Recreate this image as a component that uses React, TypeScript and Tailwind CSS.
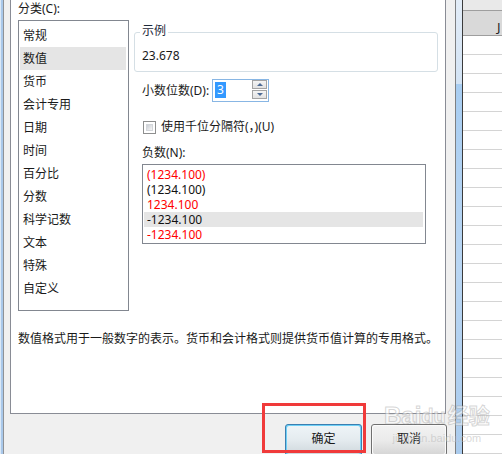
import React from 'react';

const categories = ['常规', '数值', '货币', '会计专用', '日期', '时间', '百分比', '分数', '科学记数', '文本', '特殊', '自定义'];

const negatives = [
  { text: '(1234.100)', red: true },
  { text: '(1234.100)', red: false },
  { text: '1234.100', red: true },
  { text: '-1234.100', red: false, selected: true },
  { text: '-1234.100', red: true },
];

function SpinBox() {
  return (
    <div className="w-[57px] h-[23px] border border-[#88b6e4] bg-white flex items-stretch">
      <div className="flex-1 pl-[2px] pt-[2px]">
        <span className="inline-block bg-[#3399ff] text-white leading-[16px] px-[2px]">3</span>
      </div>
      <div className="flex flex-col gap-[1px] pr-[1px] w-[16px]">
        <div className="h-[9px] border border-[#a3a3a3] bg-gradient-to-b from-[#f4f4f4] to-[#e2e2e2] flex items-center justify-center">
          <div className="w-0 h-0 border-l-[3px] border-r-[3px] border-b-[3px] border-l-transparent border-r-transparent border-b-[#4d6a94]" />
        </div>
        <div className="h-[9px] border border-[#a3a3a3] bg-gradient-to-b from-[#f4f4f4] to-[#e2e2e2] flex items-center justify-center">
          <div className="w-0 h-0 border-l-[3px] border-r-[3px] border-t-[3px] border-l-transparent border-r-transparent border-t-[#4d6a94]" />
        </div>
      </div>
    </div>
  );
}

function Checkbox() {
  return (
    <div className="w-[13px] h-[13px] border border-[#8e8f8f] bg-white p-[2px]">
      <div className="w-full h-full bg-gradient-to-br from-[#cbcfd5] to-[#f6f6f6] border border-[#d3d6da]" />
    </div>
  );
}

function ExcelSheet() {
  const rows = Array.from({ length: 22 });
  return (
    <div className="w-[39px] bg-white flex flex-col">
      <div className="h-[20px] bg-[#e9e9e9] border-b border-[#9e9e9e]" />
      <div className="h-[27px] bg-[#d9d9d9] border-b border-[#9e9e9e] pl-[34px] pt-[8px] text-[13px] leading-[16px] text-[#222]">
        J
      </div>
      {rows.map((_, i) => (
        <div key={i} className="h-[19px] shrink-0 border-b border-[#d4d4d4]" />
      ))}
    </div>
  );
}

export default function App() {
  return (
    <div className="relative w-[502px] h-[454px] overflow-hidden flex bg-[#f0f0f0] font-['Noto_Sans','Noto_Sans_CJK_SC',sans-serif] text-[12px] leading-[16px] text-[#1a1a1a]">
      {/* left window frame */}
      <div className="w-[1px] bg-[#dbe8f6]" />
      <div className="w-[2px] bg-[#a9c8ea]" />
      <div className="w-[1px] bg-[#8e9196]" />

      {/* dialog */}
      <div className="w-[451px] flex flex-col">
        <div className="ml-[6px] w-[436px] h-[414px] shrink-0 bg-white border-l border-r border-b border-[#898c95] pl-[7px]">
          <div className="flex gap-[5px]">
            {/* category column */}
            <div className="w-[111px] flex flex-col">
              <div className="h-[20px] pt-[1px]">分类(C):</div>
              <div className="h-[291px] border border-[#828790] pt-[3px] pl-[1px]">
                {categories.map((c) => (
                  <div
                    key={c}
                    className={
                      'h-[23px] w-[106px] pl-[3px] flex items-center ' +
                      (c === '数值' ? 'bg-[#e5e5e5]' : '')
                    }
                  >
                    {c}
                  </div>
                ))}
              </div>
            </div>

            {/* options column */}
            <div className="flex flex-col w-[304px]">
              <div className="relative mt-[32px] h-[40px] border border-[#d5dfe5] rounded-[3px] pl-[7px] pt-[15px]">
                <span className="absolute left-[5px] top-[-10px] bg-white px-[2px] text-[#1e2a3a]">示例</span>
                23.678
              </div>

              <div className="mt-[7px] h-[23px] pl-[8px] flex items-center">
                <span className="w-[70px]">小数位数(D):</span>
                <SpinBox />
              </div>

              <div className="mt-[17px] h-[16px] pl-[9px] flex items-center gap-[5px]">
                <Checkbox />
                <span>使用千位分隔符(，)(U)</span>
              </div>

              <div className="mt-[10px] h-[16px] pl-[8px]">负数(N):</div>

              <div className="mt-[3px] ml-[8px] w-[284px] h-[80px] border border-[#828790] pt-[2px] pl-[1px]">
                {negatives.map((n, i) => (
                  <div
                    key={i}
                    className={
                      'h-[15px] w-[279px] pl-[3px] leading-[15px] overflow-hidden ' +
                      (n.red ? 'text-[#ff0000] ' : 'text-[#111] ') +
                      (n.selected ? 'bg-[#e5e5e5]' : '')
                    }
                  >
                    {n.text}
                  </div>
                ))}
              </div>
            </div>
          </div>

          <div className="mt-[20px]">数值格式用于一般数字的表示。货币和会计格式则提供货币值计算的专用格式。</div>
        </div>

        {/* buttons */}
        <div className="mt-[10px] flex justify-end gap-[9px] pr-[8px]">
          <div className="w-[77px] h-[32px] rounded-[3px] border border-[#3c7fb1] p-[1px] bg-[#6fd0f6]">
            <div className="h-full rounded-[2px] bg-gradient-to-b from-[#eef4f7] via-[#e4ebef] to-[#d0d8dd] flex justify-center pt-[5px]">
              确定
            </div>
          </div>
          <div className="w-[76px] h-[32px] rounded-[3px] border border-[#707070] p-[1px] bg-[#fbfbfb]">
            <div className="h-full rounded-[2px] bg-gradient-to-b from-[#f2f2f2] via-[#ebebeb] to-[#d6d6d6] flex justify-center pt-[5px]">
              取消
            </div>
          </div>
        </div>
      </div>

      {/* right window frame */}
      <div className="w-[1px] bg-[#7d7f82]" />
      <div className="w-[6px] flex flex-col">
        <div className="h-[84px] bg-gradient-to-b from-[#e2ecf7] to-[#d3e3f4]" />
        <div className="flex-1 bg-gradient-to-b from-[#a8cdf1] via-[#b9d6f3] to-[#aacbed]" />
      </div>
      <div className="w-[1px] bg-[#3b3b3b]" />

      <ExcelSheet />

      {/* red highlight annotation */}
      <div className="absolute left-[262px] top-[403px] w-[104px] h-[50px] border-[3px] border-[#f03a3a]" />

      {/* watermark */}
      <div className="absolute left-[384px] top-[402px] flex flex-col items-center pointer-events-none">
        <div className="flex items-end font-['Liberation_Sans','Noto_Sans_CJK_SC',sans-serif] font-bold text-[24px] leading-[28px] text-[rgba(255,255,255,0.5)] [-webkit-text-stroke:1px_rgba(150,150,150,0.4)]">
          <span>Bai</span>
          <span className="text-[20px]">du</span>
          <span className="text-[21px] ml-[2px]">经验</span>
        </div>
        <div className="text-[11px] leading-[14px] mt-[1px] text-[rgba(190,190,190,0.6)] font-['Liberation_Sans',sans-serif]">
          jingyan.baidu.com
        </div>
      </div>
    </div>
  );
}
